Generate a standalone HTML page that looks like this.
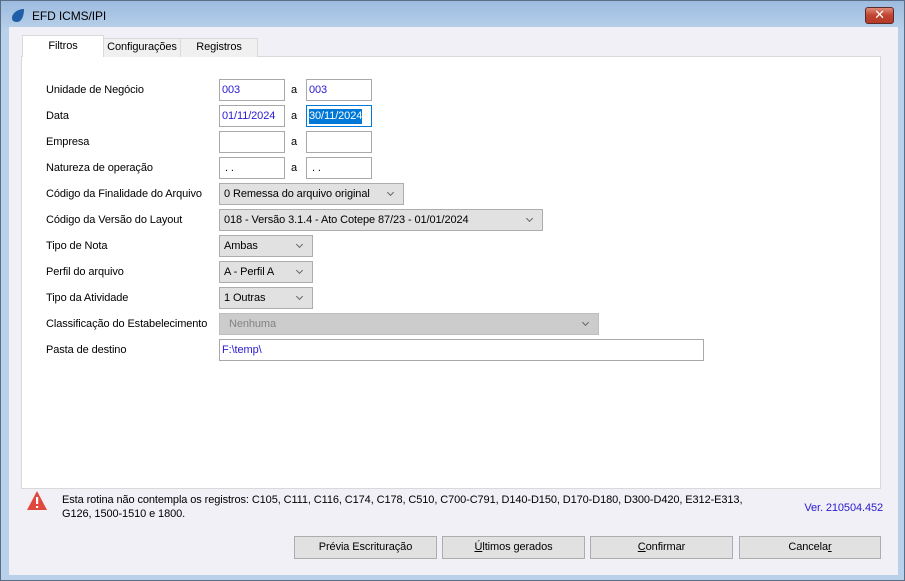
<!DOCTYPE html>
<html><head><meta charset="utf-8"><style>
*{margin:0;padding:0;box-sizing:border-box}
body{width:905px;height:581px;overflow:hidden;background:#b9d1ea;font-family:"Liberation Sans","DejaVu Sans",sans-serif;font-size:11px;letter-spacing:-0.1px;color:#000;position:relative}
.a{position:absolute;white-space:nowrap}
.frame{left:0;top:0;width:905px;height:581px;background:linear-gradient(#9dbbdf,#b9d1ea 30px);border:1px solid #5a6d85}
.client{left:9px;top:27px;width:889px;height:548px;background:#f0f0f6}
.panel{left:21px;top:56px;width:860px;height:433px;background:#fff;border:1px solid #d9d9d9}
.tab{height:19px;background:#f0f0f0;border:1px solid #d9d9d9;border-bottom:none;text-align:center;line-height:17px}
.inp{height:22px;border:1px solid #a9a9a9;background:#fff;color:#2a1ad0;line-height:20px;padding-left:2px}
.cb{height:22px;border:1px solid #adadad;background:#e1e1e1;line-height:20px;padding-left:4px}
.cb:after{content:"";position:absolute;right:10px;top:6px;width:4px;height:4px;border-right:1px solid #666;border-bottom:1px solid #666;transform:rotate(45deg)}
.lbl{left:46px}
.btn{height:23px;border:1px solid #adadad;background:#e1e1e1;text-align:center;line-height:21px}
</style></head><body>
<div class="a frame"></div>
<svg class="a" style="left:11px;top:8px" width="14" height="15" viewBox="0 0 14 15"><path d="M13 1 C7 1 1 5 1 10 C1 13 3 14 6 14 C10 14 13 9 13 1Z" fill="#1f5fa8"/></svg>
<div class="a" style="left:32px;top:9px;font-size:12px">EFD ICMS/IPI</div>
<div class="a" style="left:865px;top:7px;width:29px;height:17px;border:1px solid #5b2a2a;border-radius:3px;background:linear-gradient(#e08a78,#c0432f 50%,#b53a28);color:#fff;text-align:center;font-weight:bold;font-size:13px;line-height:14px">✕</div>
<div class="a client"></div>
<div class="a panel"></div>
<div class="a tab" style="left:103px;top:38px;width:78px">Configurações</div>
<div class="a tab" style="left:180px;top:38px;width:78px">Registros</div>
<div class="a tab" style="left:22px;top:35px;width:82px;height:22px;background:#fff;line-height:20px">Filtros</div>

<div class="a lbl" style="top:84px">Unidade de Negócio</div>
<div class="a lbl" style="top:110px">Data</div>
<div class="a lbl" style="top:136px">Empresa</div>
<div class="a lbl" style="top:162px">Natureza de operação</div>
<div class="a lbl" style="top:188px">Código da Finalidade do Arquivo</div>
<div class="a lbl" style="top:214px">Código da Versão do Layout</div>
<div class="a lbl" style="top:240px">Tipo de Nota</div>
<div class="a lbl" style="top:266px">Perfil do arquivo</div>
<div class="a lbl" style="top:292px">Tipo da Atividade</div>
<div class="a lbl" style="top:318px">Classificação do Estabelecimento</div>
<div class="a lbl" style="top:344px">Pasta de destino</div>

<div class="a inp" style="left:219px;top:79px;width:66px">003</div>
<div class="a" style="left:291px;top:84px">a</div>
<div class="a inp" style="left:306px;top:79px;width:66px">003</div>
<div class="a inp" style="left:219px;top:105px;width:66px">01/11/2024</div>
<div class="a" style="left:291px;top:110px">a</div>
<div class="a inp" style="left:306px;top:105px;width:66px;border-color:#0078d7;padding-left:2px"><span style="background:#0078d7;color:#fff;display:inline-block;line-height:15px">30/11/2024</span></div>
<div class="a inp" style="left:219px;top:131px;width:66px"></div>
<div class="a" style="left:291px;top:136px">a</div>
<div class="a inp" style="left:306px;top:131px;width:66px"></div>
<div class="a inp" style="left:219px;top:157px;width:66px;color:#000">&nbsp;. .</div>
<div class="a" style="left:291px;top:162px">a</div>
<div class="a inp" style="left:306px;top:157px;width:66px;color:#000">&nbsp;. .</div>

<div class="a cb" style="left:219px;top:183px;width:185px">0 Remessa do arquivo original</div>
<div class="a cb" style="left:219px;top:209px;width:324px">018 - Versão 3.1.4 - Ato Cotepe 87/23 - 01/01/2024</div>
<div class="a cb" style="left:219px;top:235px;width:94px">Ambas</div>
<div class="a cb" style="left:219px;top:261px;width:94px">A - Perfil A</div>
<div class="a cb" style="left:219px;top:287px;width:94px">1 Outras</div>
<div class="a cb" style="left:219px;top:313px;width:380px;background:#cccccc;border-color:#bfbfbf;color:#838383;padding-left:9px">Nenhuma</div>
<div class="a inp" style="left:219px;top:339px;width:485px">F:\temp\</div>

<svg class="a" style="left:26px;top:490px" width="22" height="21" viewBox="0 0 22 21"><path d="M11 1 L21 20 L1 20Z" fill="#e0483e"/><rect x="10" y="7" width="2.2" height="7" fill="#fff"/><rect x="10" y="16" width="2.2" height="2" fill="#fff"/></svg>
<div class="a" style="left:62px;top:493px;line-height:14px">Esta rotina não contempla os registros: C105, C111, C116, C174, C178, C510, C700-C791, D140-D150, D170-D180, D300-D420, E312-E313,<br>G126, 1500-1510 e 1800.</div>
<div class="a" style="right:22px;top:502px;color:#2a1ad0">Ver. 210504.452</div>

<div class="a btn" style="left:294px;top:536px;width:143px">Prévia Escrituração</div>
<div class="a btn" style="left:442px;top:536px;width:143px"><u>Ú</u>ltimos gerados</div>
<div class="a btn" style="left:590px;top:536px;width:143px"><u>C</u>onfirmar</div>
<div class="a btn" style="left:739px;top:536px;width:142px">Cancela<u>r</u></div>
</body></html>
